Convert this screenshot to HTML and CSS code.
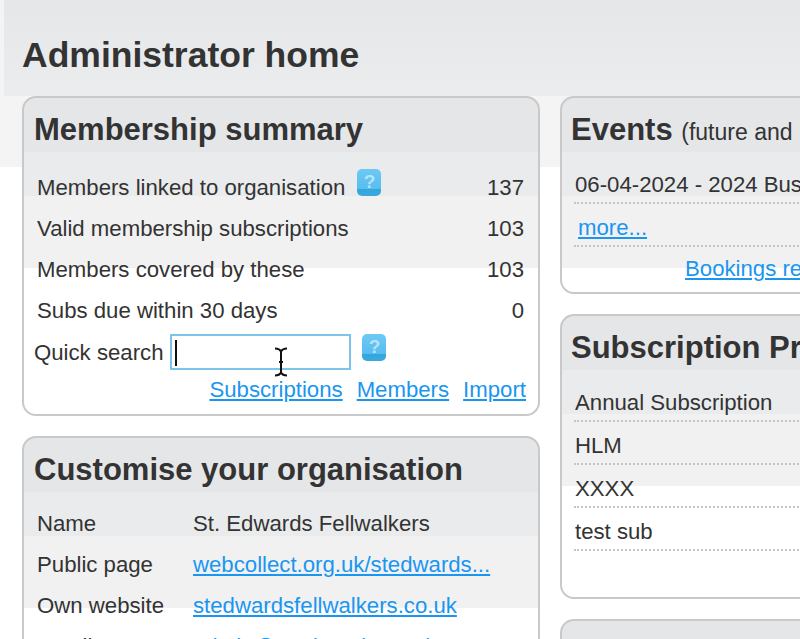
FILE: index.html
```html
<!DOCTYPE html>
<html lang="en">

<head>
    <meta charset="UTF-8">
    <meta name="viewport" content="width=device-width, initial-scale=1.0">
    <title>Administrator home</title>
    <link rel="stylesheet" href="styles.css">
</head>

<body>
    <div class="page">
        <h1>Administrator home</h1>

        <div class="columns">
            <div class="column">
                <div class="panel panel-summary">
                    <h2>Membership summary</h2>
                    <div class="stat-row">
                        <span>Members linked to organisation <span class="help">?</span></span>
                        <span>137</span>
                    </div>
                    <div class="stat-row">
                        <span>Valid membership subscriptions</span>
                        <span>103</span>
                    </div>
                    <div class="stat-row">
                        <span>Members covered by these</span>
                        <span>103</span>
                    </div>
                    <div class="stat-row">
                        <span>Subs due within 30 days</span>
                        <span>0</span>
                    </div>
                    <div class="search-row">
                        <label for="quickSearch">Quick search</label>
                        <div class="search-box">
                            <input type="text" id="quickSearch">
                            <span class="caret"></span>
                            <svg class="ibeam" width="14" height="30" viewBox="0 0 14 30" fill="none" stroke="#111" stroke-width="2">
                                <path d="M1 1.5c3 0 5 1 6 3 1-2 3-3 6-3M7 4.500v21M5 15h4M1 28.500c3 0 5-1 6-3 1 2 3 3 6 3" />
                            </svg>
                        </div>
                        <span class="help">?</span>
                    </div>
                    <div class="link-row">
                        <a href="#">Subscriptions</a>
                        <a href="#">Members</a>
                        <a href="#">Import</a>
                    </div>
                </div>

                <div class="panel panel-custom">
                    <h2>Customise your organisation</h2>
                    <div class="info-row">
                        <span class="info-label">Name</span>
                        <span>St. Edwards Fellwalkers</span>
                    </div>
                    <div class="info-row">
                        <span class="info-label">Public page</span>
                        <a href="#">webcollect.org.uk/stedwards...</a>
                    </div>
                    <div class="info-row">
                        <span class="info-label">Own website</span>
                        <a href="#">stedwardsfellwalkers.co.uk</a>
                    </div>
                    <div class="info-row">
                        <span class="info-label">Email</span>
                        <a href="#">admin@stedwards.co.uk</a>
                    </div>
                </div>
            </div>

            <div class="column column-right">
                <div class="panel panel-events">
                    <h2>Events <small>(future and recent)</small></h2>
                    <div class="list-row">06-04-2024 - 2024 Business Meeting</div>
                    <div class="list-row"><a href="#" class="more">more...</a></div>
                    <div class="bookings"><a href="#">Bookings report</a></div>
                </div>

                <div class="panel panel-products">
                    <h2>Subscription Products</h2>
                    <div class="list-row">Annual Subscription</div>
                    <div class="list-row">HLM</div>
                    <div class="list-row">XXXX</div>
                    <div class="list-row">test sub</div>
                </div>

                <div class="panel panel-next">
                    <h2>Tools</h2>
                </div>
            </div>
        </div>
    </div>
</body>

</html>
```

FILE: styles.css
```css
html,
body {
    margin: 0;
    height: 100%;
    overflow: hidden;
    background-color: #fff;
}

body {
    font-family: "Liberation Sans", Arial, sans-serif;
    font-size: 22.2px;
    line-height: 25px;
    color: #333;
}

a {
    color: #1a96f0;
}

/* Page background fades out behind the panels */
.page {
    width: 1200px;
    padding: 0 0 0 22px;
    background: linear-gradient(to bottom,
            #f4f4f5 0, #f4f4f5 167px,
            #fff 167px);
}

h1 {
    margin: 0 0 0 -18px;
    padding: 34px 0 0 18px;
    height: 96px;
    box-sizing: border-box;
    background: linear-gradient(to bottom, #e6e7e9 0, #ebecee 100%);
    font-size: 35.5px;
    line-height: 42px;
    color: #333;
}

.columns {
    display: flex;
    gap: 20px;
    align-items: flex-start;
}

.column {
    width: 518px;
    display: flex;
    flex-direction: column;
    gap: 20px;
}

.column-right h2 {
    margin-left: -1px;
}

/* Every panel has the same stepped fade, measured from its top edge */
.panel {
    box-sizing: border-box;
    border: 2px solid #c9c9c9;
    border-radius: 14px;
    padding: 0 10px;
    background: linear-gradient(to bottom,
            #e5e6e8 0, #e5e6e8 54px,
            #eaebed 54px, #eaebed 98px,
            #f1f1f2 98px, #f1f1f2 170px,
            #fff 170px);
}

h2 {
    margin: 0;
    padding-top: 13px;
    height: 63px;
    box-sizing: border-box;
    font-size: 31px;
    line-height: 38px;
    color: #333;
}

h2 small {
    font-size: 23px;
    font-weight: normal;
}

/* Membership summary */
.panel-summary {
    height: 320px;
}

.panel-summary h2 {
    height: 73px;
}

.stat-row {
    display: flex;
    justify-content: space-between;
    height: 41px;
    padding: 0 4px 0 3px;
    line-height: 34px;
}

.help {
    display: inline-block;
    position: relative;
    top: -7px;
    width: 24px;
    height: 27px;
    margin-left: 6px;
    border-radius: 5px;
    background: linear-gradient(to bottom, #6cc9f5 0, #58bdf0 74%, #34a6dc 74%, #3aa9df 100%);
    color: #b5e3f9;
    font-size: 19px;
    font-weight: bold;
    line-height: 25px;
    text-align: center;
    vertical-align: middle;
}

.search-row {
    display: flex;
    align-items: flex-start;
    height: 34px;
}

.search-row label {
    line-height: 36px;
}

.search-box {
    position: relative;
    margin: -1px 0 0 7px;
}

.search-box input {
    display: block;
    box-sizing: border-box;
    width: 181px;
    height: 36px;
    margin: 0;
    border: 2px solid #7cc5e8;
    background-color: #fff;
    outline: none;
}

.caret {
    position: absolute;
    left: 5px;
    top: 6px;
    width: 2px;
    height: 26px;
    background-color: #111;
}

.ibeam {
    position: absolute;
    left: 104px;
    top: 13px;
}

.search-row .help {
    top: -1px;
    vertical-align: top;
    margin-left: 11px;
}

.link-row {
    display: flex;
    justify-content: flex-end;
    gap: 14px;
    margin-right: 2px;
    padding-top: 8px;
    line-height: 25px;
}

/* Customise your organisation */
.panel-custom {
    height: 260px;
}

.panel-custom h2 {
    height: 69px;
}

.info-row {
    display: flex;
    height: 41px;
    padding-left: 3px;
    line-height: 34px;
}

.info-label {
    width: 156px;
    flex: none;
}

/* Right column */
.panel-events {
    height: 198px;
}

.list-row {
    height: 43px;
    margin-left: 2px;
    padding: 11px 0 0 1px;
    box-sizing: border-box;
    border-bottom: 2px dotted #c4c4c4;
    line-height: 25px;
}

.more {
    margin-left: 3px;
}

.bookings {
    padding: 9px 0 0 113px;
}

.panel-products {
    height: 285px;
}

.panel-next {
    height: 100px;
}
```
